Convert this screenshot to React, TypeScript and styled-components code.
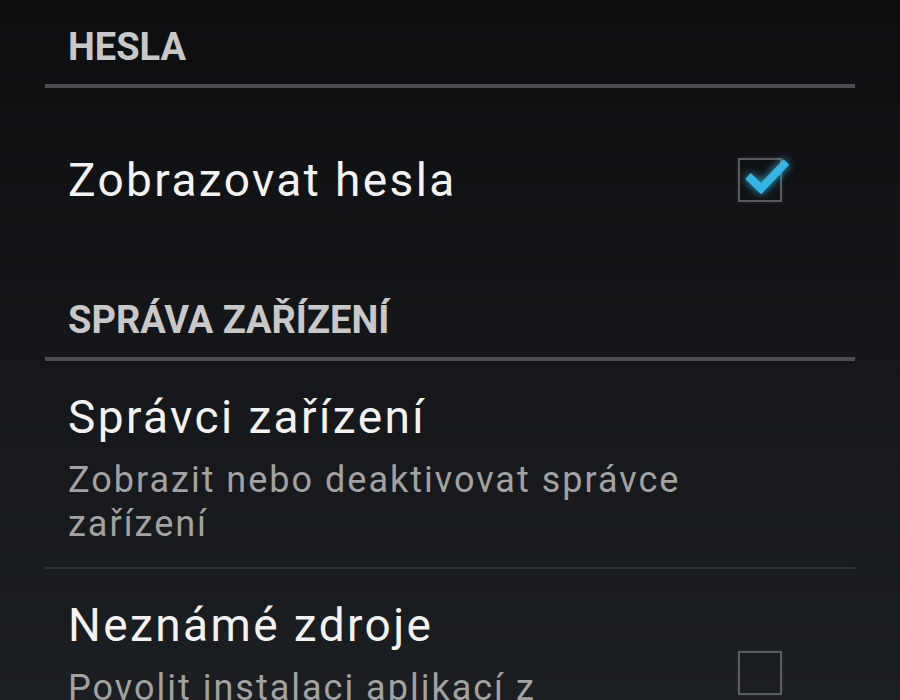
import React from "react";
import styled, { createGlobalStyle } from "styled-components";

const GlobalStyle = createGlobalStyle`
    html, body {
        margin: 0;
        padding: 0;
        background: #0d0e10;
    }
    body {
        font-family: Roboto, "Noto Sans", sans-serif;
        -webkit-font-smoothing: antialiased;
    }
`;

const Page = styled.div`
    min-height: 100vh;
    overflow: hidden;
    background: linear-gradient(180deg, #0d0e10 0%, #15171a 50%, #1d2024 100%);
`;

const List = styled.div`
    margin: -1px 45px 0;
    display: flex;
    flex-direction: column;
`;

const Header = styled.div`
    padding: 25px 23px 14px;
    border-bottom: 4px solid #4b4c4f;
    font-size: 38px;
    line-height: 46px;
    font-weight: 700;
    color: #c8c8c8;
`;

interface ItemProps {
    $tall?: boolean;
    $divider?: boolean;
}

const Item = styled.div<ItemProps>`
    display: flex;
    align-items: center;
    gap: 24px;
    min-height: ${(p) => (p.$tall ? "184px" : "0")};
    padding: ${(p) => (p.$tall ? "0 73px 0 23px" : "28px 73px 21px 23px")};
    border-bottom: ${(p) => (p.$divider ? "2px solid #303236" : "none")};
`;

const Texts = styled.div`
    flex: 1;
    display: flex;
    flex-direction: column;
    gap: 13px;
`;

const Title = styled.div`
    font-size: 46px;
    line-height: 56px;
    letter-spacing: 2.4px;
    color: #f2f2f2;
`;

const Summary = styled.div`
    font-size: 36px;
    line-height: 44px;
    letter-spacing: 2px;
    color: #a2a2a2;
    max-width: 625px;
`;

const Box = styled.span<{ $shift?: number }>`
    position: relative;
    flex: none;
    width: 40px;
    height: 40px;
    margin-top: ${(p) => p.$shift ?? 0}px;
    border: 2px solid #5a5b5e;
    box-shadow: 0 0 3px rgba(120, 120, 120, 0.25);
`;

const Tick = styled.svg`
    position: absolute;
    left: -2px;
    top: -2px;
    overflow: visible;
    filter: drop-shadow(0 0 4px rgba(51, 181, 229, 0.9));
`;

function CheckBox({ checked, shift }: { checked?: boolean; shift?: number }) {
    return (
        <Box $shift={shift}>
            {checked && (
                <Tick width="44" height="44" viewBox="0 0 44 44">
                    <path
                        d="M10 18 L23 30.5 L48.5 4"
                        fill="none"
                        stroke="#33b5e5"
                        strokeWidth="8"
                        strokeLinejoin="miter"
                    />
                </Tick>
            )}
        </Box>
    );
}

export default function App() {
    return (
        <Page>
            <GlobalStyle />
            <List>
                <Header>HESLA</Header>
                <Item $tall>
                    <Texts>
                        <Title>Zobrazovat hesla</Title>
                    </Texts>
                    <CheckBox checked />
                </Item>

                <Header>SPRÁVA ZAŘÍZENÍ</Header>
                <Item $divider>
                    <Texts>
                        <Title>Správci zařízení</Title>
                        <Summary>Zobrazit nebo deaktivovat správce zařízení</Summary>
                    </Texts>
                </Item>
                <Item>
                    <Texts>
                        <Title>Neznámé zdroje</Title>
                        <Summary>Povolit instalaci aplikací z neznámých zdrojů</Summary>
                    </Texts>
                    <CheckBox shift={-6} />
                </Item>
            </List>
        </Page>
    );
}
